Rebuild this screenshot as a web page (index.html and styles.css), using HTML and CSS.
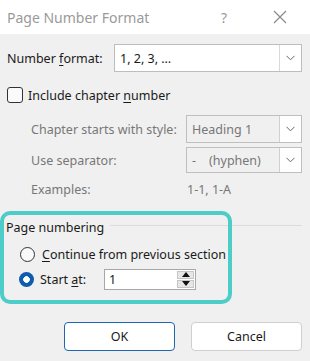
FILE: index.html
```html
<!DOCTYPE html>
<html>
<head>
<meta charset="utf-8">
<link rel="stylesheet" href="styles.css">
</head>
<body>
<div class="dialog">
  <div class="titlebar">
    <span class="title">Page Number Format</span>
    <span class="help">?</span>
    <svg class="close" width="14" height="14" viewBox="0 0 14 14"><path d="M1 1L13 13M13 1L1 13" stroke="#8a8a8a" stroke-width="1.2" fill="none"/></svg>
  </div>
  <div class="body">
    <div class="row row-format">
      <span class="label">Number <u>f</u>ormat:</span>
      <div class="select wide">
        <span class="select-text">1, 2, 3, …</span>
        <span class="arrow"><svg width="9" height="6" viewBox="0 0 9 6"><path d="M0.5 0.8L4.5 4.8L8.5 0.8" stroke="#666" fill="none"/></svg></span>
      </div>
    </div>
    <div class="check-row">
      <span class="checkbox"></span>
      <span>Include chapter <u>n</u>umber</span>
    </div>
    <div class="row row-chapter disabled">
      <span class="label">Chapter starts with style:</span>
      <div class="select narrow">
        <span class="select-text">Heading 1</span>
        <span class="arrow"><svg width="9" height="6" viewBox="0 0 9 6"><path d="M0.5 0.8L4.5 4.8L8.5 0.8" stroke="#666" fill="none"/></svg></span>
      </div>
    </div>
    <div class="row row-sep disabled">
      <span class="label">Use separator:</span>
      <div class="select narrow">
        <span class="select-text">-&nbsp;&nbsp;&nbsp;&nbsp;(hyphen)</span>
        <span class="arrow"><svg width="9" height="6" viewBox="0 0 9 6"><path d="M0.5 0.8L4.5 4.8L8.5 0.8" stroke="#666" fill="none"/></svg></span>
      </div>
    </div>
    <div class="row row-ex disabled">
      <span class="label">Examples:</span>
      <span class="ex-val">1-1, 1-A</span>
    </div>
    <div class="group">
      <div class="group-head">
        <span>Page numbering</span>
        <span class="group-line"></span>
      </div>
      <div class="radio-row">
        <span class="radio"></span>
        <span><u>C</u>ontinue from previous section</span>
      </div>
      <div class="radio-row">
        <span class="radio checked"></span>
        <span class="start-label">Start <u>a</u>t:</span>
        <div class="spin">
          <span class="spin-text">1</span>
          <div class="spin-btns">
            <span class="spin-btn"><svg width="8" height="5" viewBox="0 0 8 5"><path d="M0 5L4 0L8 5Z" fill="#111"/></svg></span>
            <span class="spin-btn"><svg width="8" height="5" viewBox="0 0 8 5"><path d="M0 0L4 5L8 0Z" fill="#111"/></svg></span>
          </div>
        </div>
      </div>
      <div class="highlight"></div>
    </div>
    <div class="buttons">
      <span class="btn primary">OK</span>
      <span class="btn">Cancel</span>
    </div>
  </div>
</div>
</body>
</html>
```

FILE: styles.css
```css
html, body {
  margin: 0;
  padding: 0;
}
body {
  font-family: "Noto Sans", "Open Sans", sans-serif;
  font-size: 12.5px;
  color: #1a1a1a;
  background: #f0f0f0;
}
u {
  text-decoration-thickness: 1px;
  text-underline-offset: 2px;
}
.dialog {
  width: 310px;
  height: 361px;
  background: #f0f0f0;
  overflow: hidden;
}
.titlebar {
  height: 34px;
  background: #ffffff;
  display: flex;
  align-items: center;
  padding-left: 7px;
  box-sizing: border-box;
}
.title {
  font-size: 14px;
  color: #9a9a9a;
  flex: 1;
}
.help {
  font-size: 14px;
  color: #9a9a9a;
  margin-right: 46px;
}
.close {
  margin-right: 23px;
}
.body {
  padding: 10px 8px 0 7px;
  display: flex;
  flex-direction: column;
}
.row {
  display: flex;
  align-items: center;
}
.row-format {
  height: 28px;
}
.label {
  flex: 0 0 auto;
}
.row-format .label {
  width: 107px;
}
.select {
  display: flex;
  align-items: stretch;
  border: 1px solid #bdbdbd;
  background: #ffffff;
  box-sizing: border-box;
  height: 100%;
}
.select.wide {
  width: 188px;
}
.select.narrow {
  width: 116px;
  margin-left: auto;
  margin-right: 0;
}
.select-text {
  flex: 1;
  display: flex;
  align-items: center;
  padding-left: 5px;
}
.arrow {
  width: 21px;
  border-left: 1px solid #d9d9d9;
  display: flex;
  align-items: center;
  justify-content: center;
}
.check-row {
  display: flex;
  align-items: center;
  gap: 5px;
  margin-top: 15px;
  height: 16px;
}
.checkbox {
  width: 14px;
  height: 14px;
  border: 1px solid #333;
  border-radius: 3px;
  background: #fafafa;
}
.disabled {
  color: #777777;
  padding-left: 24px;
}
.disabled .select {
  background: #f0f0f0;
  border-color: #bfbfbf;
}
.disabled .arrow {
  background: #ffffff;
  border-left-color: #d0d0d0;
}
.row-chapter {
  height: 28px;
  margin-top: 12px;
}
.row-sep {
  height: 26px;
  margin-top: 4px;
}
.row-ex {
  height: 20px;
  margin-top: 6px;
}
.row-ex .label {
  width: 156px;
}
.group {
  position: relative;
  margin-top: 18px;
  margin-left: -1px;
  display: flex;
  flex-direction: column;
}
.group-head {
  display: flex;
  align-items: center;
  height: 20px;
  color: #1a1a1a;
}
.group-line {
  flex: 1;
  height: 1px;
  background: #dcdcdc;
  margin-left: 6px;
  margin-top: -4px;
}
.radio-row {
  display: flex;
  align-items: center;
  padding-left: 14px;
  height: 22px;
}
.group-head + .radio-row {
  margin-top: 6px;
}
.radio-row + .radio-row {
  margin-top: 3px;
}
.radio {
  width: 13px;
  height: 13px;
  border: 1px solid #333;
  border-radius: 50%;
  margin-right: 7px;
  background: #fafafa;
  flex: 0 0 auto;
}
.radio.checked {
  width: 15px;
  height: 15px;
  border: none;
  background: radial-gradient(circle, #ffffff 0 3px, #0f5cad 3.6px);
  margin-left: -1px;
  margin-right: 6px;
}
.start-label {
  width: 64px;
}
.spin {
  display: flex;
  width: 92px;
  height: 21px;
  border: 1px solid #a8a8a8;
  background: #ffffff;
  box-sizing: border-box;
}
.spin-text {
  flex: 1;
  padding-left: 4px;
  display: flex;
  align-items: center;
}
.spin-btns {
  width: 19px;
  display: flex;
  flex-direction: column;
  gap: 1px;
  padding: 1px;
  box-sizing: border-box;
}
.spin-btn {
  flex: 1;
  background: #e6e6e6;
  border: 1px solid #c6c6c6;
  display: flex;
  align-items: center;
  justify-content: center;
}
.highlight {
  position: absolute;
  left: -6px;
  top: -6px;
  width: 232px;
  height: 93px;
  border: 4px solid #4ecdc8;
  border-radius: 10px;
  box-sizing: border-box;
  pointer-events: none;
}
.buttons {
  display: flex;
  justify-content: flex-end;
  gap: 16px;
  margin-top: 32px;
}
.btn {
  width: 111px;
  height: 29px;
  box-sizing: border-box;
  border: 1px solid #cfcfcf;
  border-radius: 4px;
  background: #ffffff;
  display: flex;
  align-items: center;
  justify-content: center;
}
.btn.primary {
  border: 1.5px solid #1f66b3;
}
```
